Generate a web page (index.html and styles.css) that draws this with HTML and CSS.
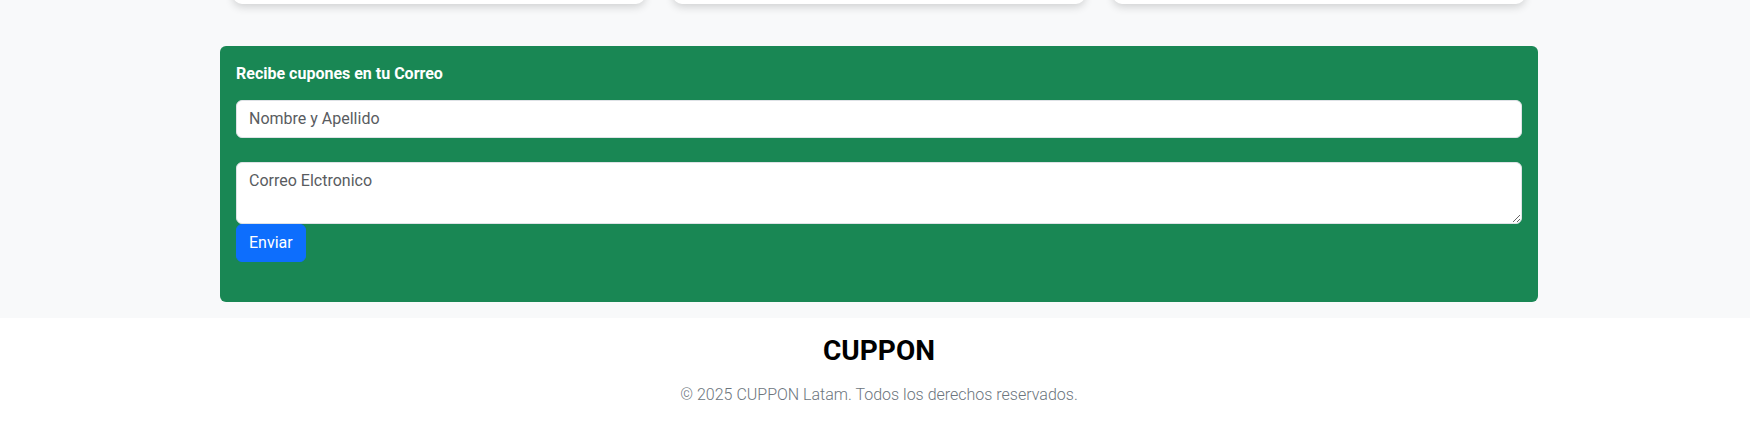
FILE: index.html
```html
<!DOCTYPE html>
<html lang="es">
<head>
<meta charset="utf-8">
<title>CUPPON</title>
<link rel="stylesheet" href="styles.css">
</head>
<body>
<main class="page">
  <section class="main-section">
    <div class="wrap">
      <div class="cards">
        <div class="card"></div>
        <div class="card"></div>
        <div class="card"></div>
      </div>
      <div class="subscribe">
        <h6 class="subscribe-title">Recibe cupones en tu Correo</h6>
        <form class="subscribe-form">
          <input class="field" type="text" placeholder="Nombre y Apellido">
          <textarea class="field area" rows="2" placeholder="Correo Elctronico"></textarea>
          <button class="btn" type="button">Enviar</button>
        </form>
      </div>
    </div>
  </section>
  <footer class="footer">
    <h3 class="brand">CUPPON</h3>
    <p class="copy">© 2025 CUPPON Latam. Todos los derechos reservados.</p>
  </footer>
</main>
</body>
</html>
```

FILE: styles.css
```css
* { box-sizing: border-box; }
html, body { margin: 0; padding: 0; }
body {
  font-family: Roboto, "Liberation Sans", sans-serif;
  font-size: 16px;
  line-height: 1.5;
  color: #212529;
  background: #ffffff;
  overflow: hidden;
}
.main-section {
  background: #f8f9fa;
  padding-left: 8px;
  padding-bottom: 16px;
}
.wrap {
  width: 1318px;
  margin: 0 auto;
}
.cards {
  display: grid;
  grid-template-columns: repeat(3, 1fr);
  column-gap: 27.6px;
  padding: 0 12.6px;
  margin-top: -40px;
}
.card {
  height: 44px;
  background: #fff;
  border-radius: 0 0 9px 9px;
  box-shadow: 0 3px 8px rgba(0, 0, 0, 0.16);
}
.subscribe {
  margin-top: 42px;
  background: #198754;
  border-radius: 6px;
  padding: 16px 16px 40px;
}
.subscribe-title {
  margin: 0;
  padding-top: 2px;
  font-size: 16px;
  font-weight: 700;
  line-height: 20px;
  color: #fff;
}
.subscribe-form {
  display: flex;
  flex-direction: column;
  align-items: flex-start;
  margin-top: 16px;
}
.field {
  display: block;
  width: 100%;
  font-family: inherit;
  font-size: 16px;
  line-height: 24px;
  padding: 6px 12px;
  color: #212529;
  background: #fff;
  border: 1px solid #dee2e6;
  border-radius: 6px;
  margin: 0;
}
.field::placeholder {
  color: #595c5f;
  opacity: 1;
}
.area {
  height: 62px;
  margin-top: 24px;
  resize: vertical;
}
.btn {
  font-family: inherit;
  font-size: 16px;
  line-height: 24px;
  padding: 6px 12px;
  color: #fff;
  background: #0d6efd;
  border: 1px solid #0d6efd;
  border-radius: 6px;
  cursor: pointer;
}
.footer {
  text-align: center;
  padding-left: 8px;
  padding-top: 16px;
  padding-bottom: 24px;
}
.brand {
  margin: 0 0 15px;
  font-size: 28px;
  font-weight: 700;
  line-height: 1.2;
  color: #000;
}
.copy {
  margin: 0;
  font-size: 16px;
  font-weight: 300;
  color: #6c757d;
}
```
